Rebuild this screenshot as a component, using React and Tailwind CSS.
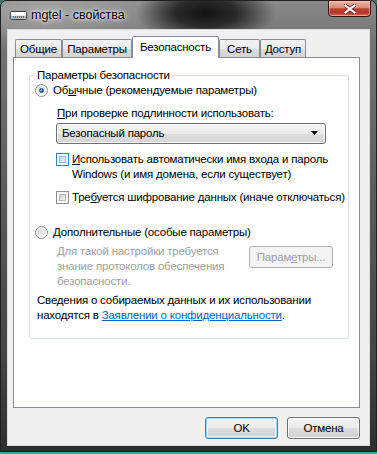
import React from "react";

const F = { fontFamily: '"Liberation Sans", Arial, sans-serif' };

function Radio({ checked }) {
  return (
    <span className="relative inline-block w-[13px] h-[13px] rounded-full border border-[#8f8f8f] bg-[linear-gradient(135deg,#e6e6e6_0%,#f8f8f8_50%,#ffffff_100%)] shrink-0">
      <span className="absolute inset-[2px] rounded-full bg-[linear-gradient(135deg,#d4d4d4,#f4f4f4)]" />
      {checked && (
        <span className="absolute inset-[3px] rounded-full bg-[radial-gradient(circle_at_35%_35%,#a6d5f7_0%,#2f7cc7_45%,#0d3f7a_100%)] border border-[#1b4e86]" />
      )}
    </span>
  );
}

function Check({ hot }) {
  return hot ? (
    <span className="inline-block w-[13px] h-[13px] border border-[#3c7fb1] bg-white p-[2px] shrink-0">
      <span className="block w-full h-full border border-[#8ab8e0] bg-[linear-gradient(135deg,#b9dcf6,#e9f5fd)]" />
    </span>
  ) : (
    <span className="inline-block w-[13px] h-[13px] border border-[#8f8f8f] bg-white p-[2px] shrink-0">
      <span className="block w-full h-full border border-[#b8b8b8] bg-[linear-gradient(135deg,#cbcbcb,#f6f6f6)]" />
    </span>
  );
}

function Tab({ w, label, sel }) {
  return sel ? (
    <div
      className="h-[22px] -mb-px relative z-10 flex items-center justify-center border border-b-0 border-[#898c95] bg-white rounded-t-[2px] text-black"
      style={{ width: w }}
    >
      <span className="pb-[1px]">{label}</span>
    </div>
  ) : (
    <div
      className="h-[18px] flex items-center justify-center border border-b-0 border-[#898c95] bg-[linear-gradient(180deg,#f3f3f3_0%,#ebebeb_50%,#dedede_51%,#d4d4d4_100%)] rounded-t-[2px] text-black"
      style={{ width: w }}
    >
      <span className="pt-[1px]">{label}</span>
    </div>
  );
}

export default function App() {
  return (
    <div
      className="w-[377px] h-[454px] relative overflow-hidden flex flex-col text-[11.5px] tracking-[-0.2px] leading-[15px] text-black bg-[#3c6e73] whitespace-nowrap"
      style={F}
    >
      <div className="flex-1 flex flex-col rounded-t-[7px] border border-[#1f1f1f] [background:radial-gradient(ellipse_70px_30px_at_205px_12px,#121212_0%,#2b2b2b_45%,rgba(60,60,60,0)_100%),radial-gradient(ellipse_140px_40px_at_40px_10px,#a4a4a4_0%,rgba(150,150,150,0)_100%),linear-gradient(180deg,#8a8a8a_0%,#757575_8%,#5e5e5e_40%,#444444_80%,#2e2e2e_100%)]">
        {/* title bar */}
        <div className="h-[28px] flex items-center pl-[9px] relative shrink-0">
          <svg width="17" height="10" viewBox="0 0 17 10" className="mt-[1px]">
            <rect x="0.5" y="0.5" width="16" height="8" rx="1" fill="#e8ecef" stroke="#3b4045" />
            <rect x="1" y="1" width="15" height="3" fill="#ffffff" />
            <rect x="1" y="5" width="15" height="3" fill="#b7c2cc" />
            <rect x="3" y="5" width="1" height="2" fill="#2a6db0" />
            <rect x="5" y="5" width="1" height="2" fill="#2a6db0" />
            <rect x="7" y="5" width="1" height="2" fill="#2a6db0" />
            <rect x="9" y="5" width="1" height="2" fill="#2a6db0" />
            <rect x="11" y="5" width="1" height="2" fill="#2a6db0" />
            <rect x="13" y="5" width="1" height="2" fill="#2a6db0" />
          </svg>
          <span className="ml-[4px] text-[12.5px] tracking-normal text-black [text-shadow:0_0_6px_#ffffff,0_0_3px_#ffffff]">
            mgtel - свойства
          </span>
          <div className="absolute top-[-1px] right-[5px] w-[43px] h-[17px] rounded-b-[4px] border border-[#3a1410] bg-[linear-gradient(180deg,#e9b3a3_0%,#d88b78_45%,#c0402e_52%,#b5372a_80%,#d7705a_100%)] flex items-center justify-center shadow-[inset_0_0_0_1px_rgba(255,220,200,0.5)]">
            <svg width="12" height="10" viewBox="0 0 12 10">
              <path d="M1 1 L11 9 M11 1 L1 9" stroke="#5a1a14" strokeWidth="3.6" strokeLinecap="square" />
              <path d="M1.5 1.5 L10.5 8.5 M10.5 1.5 L1.5 8.5" stroke="#ffffff" strokeWidth="2.2" strokeLinecap="square" />
            </svg>
          </div>
        </div>

        {/* client area */}
        <div className="ml-[6px] mr-[6px] h-[417px] border border-[#dcdcdc] bg-[#f0f0f0] flex flex-col shrink-0">
          {/* tabs */}
          <div className="pl-[6px] pt-[5px] flex items-end h-[27px]">
            <div className="ml-[1px]" />
            <Tab w={47} label="Общие" />
            <Tab w={70} label="Параметры" />
            <Tab w={87} label="Безопасность" sel />
            <Tab w={41} label="Сеть" />
            <Tab w={46} label="Доступ" />
          </div>
          {/* panel */}
          <div className="ml-[5px] w-[347px] h-[351px] border border-[#898c95] bg-white relative">
            <div className="ml-[15px] mt-[17px] w-[320px] h-[264px] border border-[#d5dfe5] rounded-[3px] relative flex flex-col">
              <span className="absolute -top-[8px] left-[5px] bg-white px-[2px] leading-[15px]">
                Параметры безопасности
              </span>
              <div className="mt-[7px] pl-[5px] flex items-center">
                <Radio checked />
                <span className="ml-[5px]">
                  Об<u>ы</u>чные (рекомендуемые параметры)
                </span>
              </div>
              <div className="mt-[8px] pl-[27px]">
                <u>П</u>ри проверке подлинности использовать:
              </div>
              <div className="mt-[2px] ml-[26px] w-[270px] h-[21px] border border-[#707070] rounded-[3px] bg-[linear-gradient(180deg,#f4f4f4_0%,#ececec_50%,#dedede_51%,#d6d6d6_100%)] flex items-center pl-[5px] pr-[5px] shadow-[inset_0_0_0_1px_#fafafa]">
                <span className="flex-1">Безопасный пароль</span>
                <svg width="8" height="5" viewBox="0 0 8 5" className="mr-[1px]">
                  <path d="M0 0 H7 L3.5 4 Z" fill="#000" />
                </svg>
              </div>
              <div className="mt-[8px] pl-[26px] flex items-start">
                <span className="mt-[1px]">
                  <Check hot />
                </span>
                <span className="ml-[3px]">
                  <u>И</u>спользовать автоматически имя входа и пароль
                  <br />
                  Windows (и имя домена, если существует)
                </span>
              </div>
              <div className="mt-[8px] pl-[26px] flex items-start">
                <span className="mt-[1px]">
                  <Check />
                </span>
                <span className="ml-[3px]">
                  Тре<u>б</u>уется шифрование данных (иначе отключаться)
                </span>
              </div>
              <div className="mt-[17px] pl-[5px] flex items-center">
                <Radio />
                <span className="ml-[5px]">
                  <u>Д</u>ополнительные (особые параметры)
                </span>
              </div>
              <div className="mt-[4px] pl-[27px] flex items-start">
                <span className="w-[192px] text-[#a0a0a0]">
                  Для такой настройки требуется
                  <br />
                  знание протоколов обеспечения
                  <br />
                  безопасности.
                </span>
                <div className="mt-[2px] w-[84px] h-[22px] border border-[#adb2b5] rounded-[3px] bg-[#f4f4f4] flex items-center justify-center text-[#a0a0a0]">
                  <span>
                    Парам<u>е</u>тры...
                  </span>
                </div>
              </div>
              <div className="mt-[4px] pl-[7px]">
                Сведения о собираемых данных и их использовании
                <br />
                находятся в{" "}
                <span className="text-[#0066cc] underline">Заявлении о конфиденциальности</span>.
              </div>
            </div>
          </div>
          {/* buttons */}
          <div className="mt-[9px] ml-[5px] w-[347px] flex justify-end gap-[9px]">
            <div className="w-[73px] h-[22px] rounded-[3px] border border-[#3c7fb1] bg-[linear-gradient(180deg,#f2f2f2_0%,#ebebeb_50%,#dddddd_51%,#cfcfcf_100%)] shadow-[inset_0_0_0_1px_#9fdcf5,inset_0_0_0_2px_#e7f5fc] flex items-center justify-center">
              OK
            </div>
            <div className="w-[73px] h-[22px] rounded-[3px] border border-[#707070] bg-[linear-gradient(180deg,#f2f2f2_0%,#ebebeb_50%,#dddddd_51%,#cfcfcf_100%)] shadow-[inset_0_0_0_1px_#fbfbfb] flex items-center justify-center">
              Отмена
            </div>
          </div>
        </div>
        <div className="flex-1" />
      </div>
      <div className="h-[2px] bg-[#3aa6a8] shrink-0" />
    </div>
  );
}
